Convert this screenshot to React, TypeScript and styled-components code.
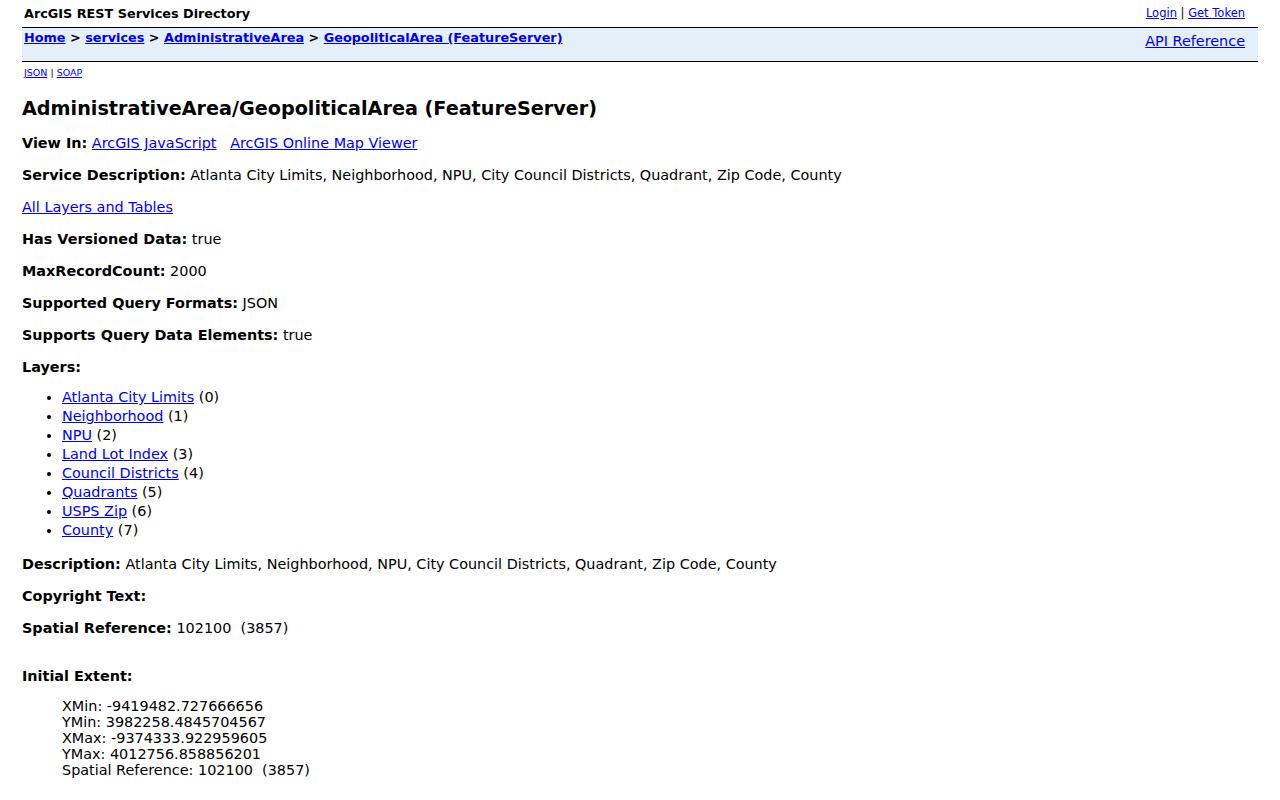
import React from "react";
import styled, { createGlobalStyle } from "styled-components";

const GlobalStyle = createGlobalStyle`
  html, body {
    margin: 0;
    padding: 0;
    background: #ffffff;
    color: #000000;
    font-family: "DejaVu Sans", Verdana, sans-serif;
  }
  a { color: #0000ee; }
`;

const Page = styled.div`
  padding: 0 22px;
`;

const UserBar = styled.div`
  display: flex;
  justify-content: space-between;
  align-items: center;
  height: 27px;
  padding: 0 13px 0 2px;
`;

const SiteTitle = styled.span`
  font-size: 12.8px;
  font-weight: bold;
`;

const UserLinks = styled.span`
  font-size: 11.5px;
  margin-bottom: 1px;
`;

const NavBar = styled.div`
  display: flex;
  justify-content: space-between;
  align-items: flex-start;
  height: 33px;
  background: #e5eff7;
  border-top: 1px solid #000;
  border-bottom: 1px solid #000;
  padding: 0 13px 0 2px;
`;

const Crumbs = styled.div`
  font-size: 12.8px;
  font-weight: bold;
  padding-top: 2px;
`;

const ApiRef = styled.a`
  font-size: 14.4px;
  padding-top: 5px;
`;

const Formats = styled.div`
  font-size: 9.5px;
  padding: 5px 0 0 2px;
`;

const Heading = styled.h2`
  font-size: 19.2px;
  font-weight: bold;
  margin: 19px 0 0;
`;

const Body = styled.div`
  font-size: 14.4px;
  line-height: 16px;
`;

const Row = styled.div<{ $gap?: number }>`
  margin-top: ${(p) => p.$gap ?? 16}px;
`;

const Label = styled.b``;

const LayerList = styled.ul`
  margin: 13px 0 0;
  padding-left: 40px;
  line-height: 19px;
`;

const Extent = styled.div`
  margin-top: 14px;
  padding-left: 40px;
`;

const layers = [
  "Atlanta City Limits",
  "Neighborhood",
  "NPU",
  "Land Lot Index",
  "Council Districts",
  "Quadrants",
  "USPS Zip",
  "County",
];

export default function App() {
  return (
    <Page>
      <GlobalStyle />
      <UserBar>
        <SiteTitle>ArcGIS REST Services Directory</SiteTitle>
        <UserLinks>
          <a href="#">Login</a> | <a href="#">Get Token</a>
        </UserLinks>
      </UserBar>
      <NavBar>
        <Crumbs>
          <a href="#">Home</a> &gt; <a href="#">services</a> &gt;{" "}
          <a href="#">AdministrativeArea</a> &gt;{" "}
          <a href="#">GeopoliticalArea (FeatureServer)</a>
        </Crumbs>
        <ApiRef href="#">API Reference</ApiRef>
      </NavBar>
      <Formats>
        <a href="#">JSON</a> | <a href="#">SOAP</a>
      </Formats>
      <Heading>AdministrativeArea/GeopoliticalArea (FeatureServer)</Heading>
      <Body>
        <Row $gap={15}>
          <Label>View In:</Label> <a href="#">ArcGIS JavaScript</a>
          &nbsp;&nbsp; <a href="#">ArcGIS Online Map Viewer</a>
        </Row>
        <Row>
          <Label>Service Description:</Label> Atlanta City Limits, Neighborhood, NPU, City
          Council Districts, Quadrant, Zip Code, County
        </Row>
        <Row>
          <a href="#">All Layers and Tables</a>
        </Row>
        <Row>
          <Label>Has Versioned Data:</Label> true
        </Row>
        <Row>
          <Label>MaxRecordCount:</Label> 2000
        </Row>
        <Row>
          <Label>Supported Query Formats:</Label> JSON
        </Row>
        <Row>
          <Label>Supports Query Data Elements:</Label> true
        </Row>
        <Row>
          <Label>Layers:</Label>
        </Row>
        <LayerList>
          {layers.map((name, i) => (
            <li key={name}>
              <a href="#">{name}</a> ({i})
            </li>
          ))}
        </LayerList>
        <Row $gap={16}>
          <Label>Description:</Label> Atlanta City Limits, Neighborhood, NPU, City Council
          Districts, Quadrant, Zip Code, County
        </Row>
        <Row>
          <Label>Copyright Text:</Label>
        </Row>
        <Row>
          <Label>Spatial Reference:</Label> 102100&nbsp; (3857)
        </Row>
        <Row $gap={32}>
          <Label>Initial Extent:</Label>
        </Row>
        <Extent>
          <div>XMin: -9419482.727666656</div>
          <div>YMin: 3982258.4845704567</div>
          <div>XMax: -9374333.922959605</div>
          <div>YMax: 4012756.858856201</div>
          <div>Spatial Reference: 102100&nbsp; (3857)</div>
        </Extent>
      </Body>
    </Page>
  );
}
